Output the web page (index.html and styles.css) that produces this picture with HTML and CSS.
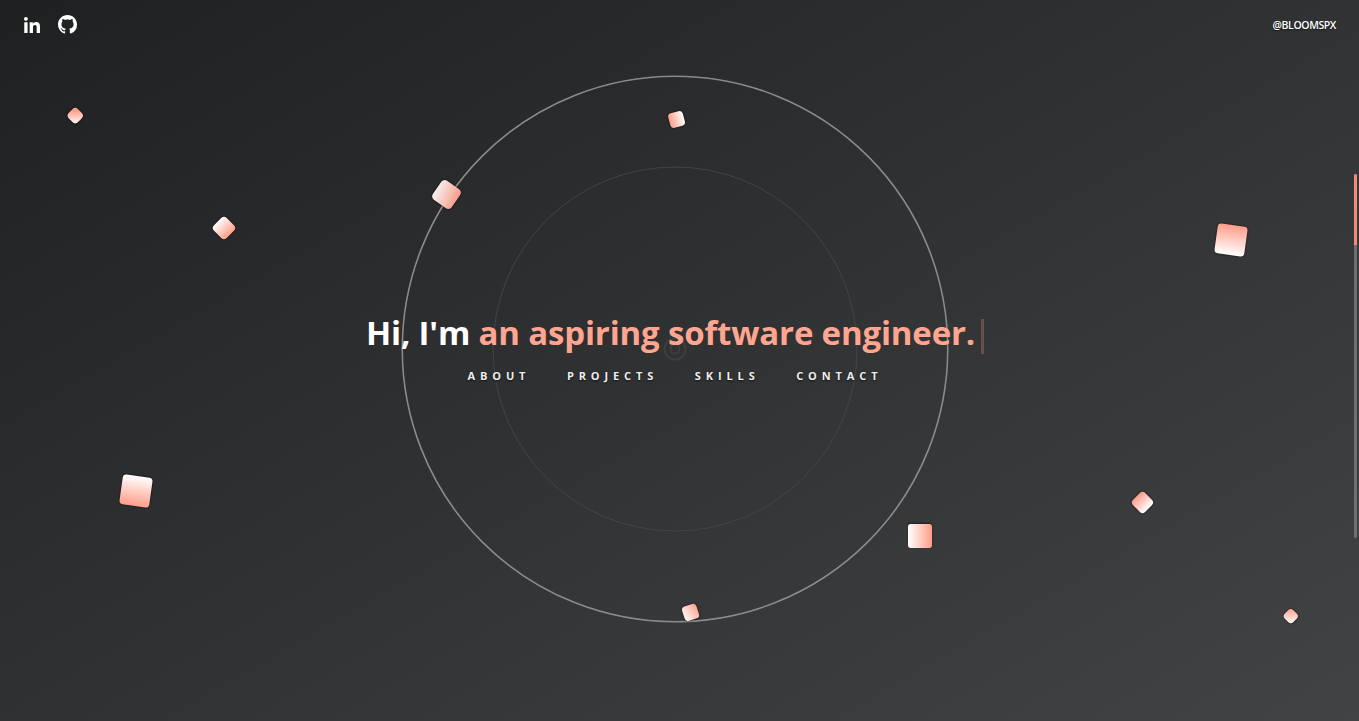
FILE: index.html
```html
<!DOCTYPE html>
<html lang="en">
<head>
<meta charset="utf-8">
<title>Bloomspx</title>
<link rel="stylesheet" href="styles.css">
</head>
<body>
<div class="page">
  <div class="canvas" aria-hidden="true">
    <svg class="ring ring-outer" viewBox="0 0 548 548"><circle cx="274" cy="274" r="272.75" fill="none" stroke="#8a8b8b" stroke-width="1.6"/></svg>
    <span class="ring ring-inner"></span>
    <span class="ring ring-dot"></span>
    <span class="ring ring-core"></span>
    <span class="tile t1"></span><span class="tile t2"></span><span class="tile t3"></span>
    <span class="tile t4"></span><span class="tile t5"></span><span class="tile t6"></span>
    <span class="tile t7"></span><span class="tile t8"></span><span class="tile t9"></span>
    <span class="tile t10"></span>
  </div>
  <header class="topbar">
    <nav class="socials">
      <a class="social" href="#" aria-label="LinkedIn">
        <svg class="icon-in" viewBox="0 0 448 448"><path fill="currentColor" d="M100.28 448H7.4V148.9h92.88zM53.79 108.1C24.09 108.1 0 83.5 0 53.8a53.79 53.79 0 0 1 107.58 0c0 29.7-24.1 54.3-53.79 54.3zM447.9 448h-92.68V302.4c0-34.7-.7-79.2-48.29-79.2-48.29 0-55.69 37.7-55.69 76.7V448h-92.78V148.9h89.08v40.8h1.3c12.4-23.5 42.69-48.3 87.88-48.3 94 0 111.28 61.9 111.28 142.3V448z"/></svg>
      </a>
      <a class="social" href="#" aria-label="GitHub">
        <svg class="icon-gh" viewBox="0 0 16 16"><path fill="currentColor" d="M8 0C3.58 0 0 3.58 0 8c0 3.54 2.29 6.53 5.47 7.59.4.07.55-.17.55-.38 0-.19-.01-.82-.01-1.49-2.01.37-2.53-.49-2.69-.94-.09-.23-.48-.94-.82-1.13-.28-.15-.68-.52-.01-.53.63-.01 1.08.58 1.23.82.72 1.21 1.87.87 2.33.66.07-.52.28-.87.51-1.07-1.78-.2-3.64-.89-3.64-3.95 0-.87.31-1.59.82-2.15-.08-.2-.36-1.02.08-2.12 0 0 .67-.21 2.2.82.64-.18 1.32-.27 2-.27.68 0 1.36.09 2 .27 1.53-1.04 2.2-.82 2.2-.82.44 1.1.16 1.92.08 2.12.51.56.82 1.27.82 2.15 0 3.07-1.87 3.75-3.65 3.95.29.25.54.73.54 1.48 0 1.07-.01 1.93-.01 2.2 0 .21.15.46.55.38A8.013 8.013 0 0016 8c0-4.42-3.58-8-8-8z"/></svg>
      </a>
    </nav>
    <span class="handle">@BLOOMSPX</span>
  </header>
  <main class="hero">
    <h1 class="headline">Hi, I'm <span class="accent">an aspiring software engineer.</span><span class="cursor"></span></h1>
    <nav class="menu">
      <a href="#">ABOUT</a>
      <a href="#">PROJECTS</a>
      <a href="#">SKILLS</a>
      <a href="#">CONTACT</a>
    </nav>
  </main>
  <div class="scrollbar"><span class="scroll-thumb"></span></div>
</div>
</body>
</html>
```
FILE: styles.css
```css
* { box-sizing: border-box; }
html, body { margin: 0; height: 100%; overflow: hidden; }
body { font-family: "Open Sans", "Noto Sans", "Liberation Sans", sans-serif; color: #fff; }

.page {
  position: relative;
  width: 1359px;
  height: 721px;
  display: flex;
  flex-direction: column;
  padding-right: 9px;
  background: linear-gradient(150deg, #1f2021 0%, #424344 100%);
  overflow: hidden;
}

.canvas { position: absolute; inset: 0; }

.topbar {
  position: relative;
  height: 50px;
  flex: none;
  display: flex;
  align-items: center;
  justify-content: space-between;
  padding: 0 14px 1px 24px;
}
.socials { display: flex; align-items: center; gap: 18px; }
.social { display: flex; color: #fff; }
.icon-in { width: 16px; height: 16px; }
.icon-gh { width: 19px; height: 19px; }
.handle { font-size: 10.5px; font-weight: 600; letter-spacing: -.4px; text-shadow: 0 1px 2px rgba(0,0,0,.6); }

.hero {
  position: relative;
  height: 597px;
  flex: none;
  display: flex;
  flex-direction: column;
  align-items: center;
  justify-content: center;
  padding-bottom: 4px;
}
.headline {
  margin: 0;
  font-size: 33px;
  line-height: 48px;
  font-weight: 700;
  letter-spacing: -.17px;
  display: flex;
  align-items: center;
  white-space: pre;
}
.accent { color: #ffa590; }
.cursor { width: 3px; height: 35px; margin: 6px 0 0 6px; background: rgba(255,165,144,.25); }
.menu { display: flex; gap: 36.5px; margin-top: 11px; }
.menu a {
  color: #eee;
  text-decoration: none;
  font-size: 11px;
  font-weight: 700;
  line-height: 16px;
  letter-spacing: 4.9px;
  text-shadow: 0 1px 2px rgba(0,0,0,.7);
}

.ring { position: absolute; border-radius: 50%; left: 675px; top: 348.5px; transform: translate(-50%, -50%); }
.ring-outer { width: 548px; height: 548px; }
.ring-inner { width: 365px; height: 365px; border: 1px solid #434445; }
.ring-dot { width: 23px; height: 23px; border: 2px solid #3d3e3f; }
.ring-core { width: 11px; height: 11px; border: 2px solid #3d3e3f; }

.tile {
  position: absolute;
  border-radius: 18%;
  box-shadow: 0 0 2px rgba(0,0,0,.9);
}
.t1 { left: 69px; top: 109px; width: 12.5px; height: 12.5px; border-radius: 32%; transform: rotate(45deg); background: linear-gradient(315deg, #fff, #ff9d88 80%); }
.t2 { left: 215px; top: 219px; width: 18px; height: 18px; border-radius: 22%; transform: rotate(45deg); background: linear-gradient(90deg, #fff, #ff9d88); }
.t3 { left: 434.5px; top: 182.5px; width: 23px; height: 23px; opacity: .96; transform: rotate(35deg); background: linear-gradient(80deg, #fff, #ff9d88); }
.t4 { left: 669px; top: 111.5px; width: 14.5px; height: 14.5px; border-radius: 24%; transform: rotate(-15deg); background: linear-gradient(90deg, #ff9d88, #fff); }
.t5 { left: 1216px; top: 224.5px; width: 30px; height: 30px; border-radius: 12%; transform: rotate(8deg); background: linear-gradient(180deg, #ff9d88, #fff); }
.t6 { left: 120.5px; top: 476px; width: 30px; height: 30px; border-radius: 12%; transform: rotate(8deg); background: linear-gradient(180deg, #fff, #ff9d88); }
.t7 { left: 908px; top: 524px; width: 24px; height: 24px; border-radius: 12%; box-shadow: 0 -1px 2px rgba(0,0,0,.5); background: linear-gradient(90deg, #fff, #ff9d88); }
.t8 { left: 683px; top: 604.5px; width: 14.5px; height: 14.5px; border-radius: 24%; transform: rotate(-18deg); background: linear-gradient(70deg, #fff, #ff9d88); }
.t9 { left: 1133.5px; top: 494px; width: 17px; height: 17px; border-radius: 22%; transform: rotate(45deg); background: linear-gradient(90deg, #ff9d88, #fff); }
.t10 { left: 1285px; top: 609.5px; width: 11.5px; height: 11.5px; border-radius: 32%; transform: rotate(45deg); background: linear-gradient(135deg, #ff9d88, #fff); }

.scrollbar {
  position: absolute;
  left: 1354px;
  top: 174px;
  width: 3px;
  height: 364px;
  border-radius: 2px;
  background: #6c6f75;
}
.scroll-thumb { display: block; height: 71px; border-radius: 2px 2px 0 0; background: #f98a72; }
```
